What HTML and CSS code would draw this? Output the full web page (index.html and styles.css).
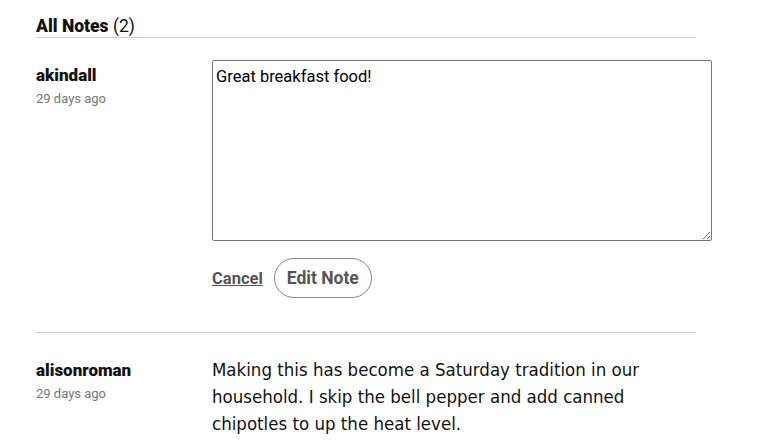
FILE: index.html
```html
<!DOCTYPE html>
<html lang="en">
<head>
    <meta charset="UTF-8">
    <meta name="viewport" content="width=device-width, initial-scale=1.0">
    <title>All Notes</title>
    <link rel="stylesheet" href="styles.css">
</head>
<body>
    <div class="notes">
        <h2 class="notes-title">All Notes <span class="count">(2)</span></h2>

        <div class="note">
            <div class="note-meta">
                <div class="note-user">akindall</div>
                <div class="note-date">29 days ago</div>
            </div>
            <div class="note-body">
                <textarea class="note-edit">Great breakfast food!</textarea>
                <div class="note-actions">
                    <a href="#" class="cancel">Cancel</a>
                    <button class="edit-btn">Edit Note</button>
                </div>
            </div>
        </div>

        <div class="note">
            <div class="note-meta">
                <div class="note-user">alisonroman</div>
                <div class="note-date">29 days ago</div>
            </div>
            <div class="note-body">
                <p class="note-text">Making this has become a Saturday tradition in our household. I skip the bell pepper and add canned chipotles to up the heat level.</p>
            </div>
        </div>
    </div>
</body>
</html>
```

FILE: styles.css
```css
body {
    margin: 0;
    padding: 0;
    background: #fff;
    color: #121212;
    font-family: Roboto, 'Liberation Sans', sans-serif;
    overflow: hidden;
}

.notes {
    width: 660px;
    margin-left: 36px;
    padding-top: 16px;
}

.notes-title {
    margin: 0;
    font-size: 17.5px;
    font-weight: 900;
    line-height: 21px;
    border-bottom: 1px solid #ccc;
}

.notes-title .count {
    font-weight: 400;
}

.note {
    display: flex;
    padding: 22px 0 34px;
    border-bottom: 1px solid #ccc;
}

.note:last-child {
    border-bottom: none;
    padding-bottom: 0;
}

.note-meta {
    width: 176px;
    flex-shrink: 0;
}

.note-user {
    font-weight: 900;
    font-size: 17px;
    line-height: 20px;
    margin-top: 5px;
}

.note-date {
    font-size: 13px;
    color: #777;
    margin-top: 6px;
}

.note-body {
    flex: 1;
}

.note-edit {
    display: block;
    box-sizing: border-box;
    width: 500px;
    height: 181px;
    margin: 0;
    padding: 6px 3px 3px;
    font-family: Roboto, 'Liberation Sans', sans-serif;
    font-size: 16.5px;
    color: #000;
    border: 1px solid #767676;
    border-radius: 2px;
}

.note-actions {
    display: flex;
    align-items: center;
    margin-top: 17px;
}

.cancel {
    font-weight: 700;
    font-size: 16.5px;
    color: #555;
    margin-right: 11px;
}

.edit-btn {
    height: 40px;
    padding: 0 12px;
    font-family: Roboto, 'Liberation Sans', sans-serif;
    font-weight: 700;
    font-size: 17.5px;
    color: #555;
    background: #fff;
    border: 1px solid #888;
    border-radius: 20px;
}

.note-text {
    margin: 1px 0 0;
    font-family: 'DejaVu Sans Condensed', 'DejaVu Sans', sans-serif;
    font-stretch: condensed;
    font-size: 18.5px;
    line-height: 27px;
    width: 460px;
}
```
